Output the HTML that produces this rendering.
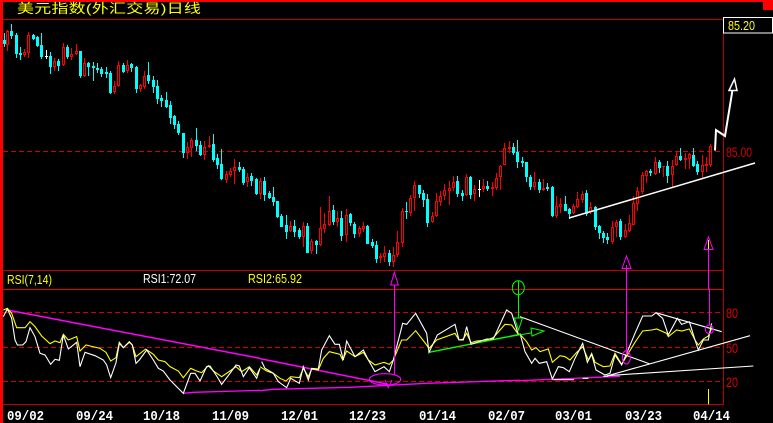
<!DOCTYPE html>
<html>
<head>
<meta charset="utf-8">
<style>
html,body{margin:0;padding:0;background:#000;width:773px;height:423px;overflow:hidden}
svg{display:block;position:absolute;left:0;top:0}
text{font-family:"Liberation Sans",sans-serif}
</style>
</head>
<body>
<svg width="773" height="423" viewBox="0 0 773 423" xmlns="http://www.w3.org/2000/svg">
<rect width="773" height="423" fill="#000"/>
<g shape-rendering="crispEdges" fill="none">
<path d="M3 19.5H723.5M3 270.5H723M3 404.5H723M723.5 19V405" stroke="#c00000"/>
<path d="M3 289.5H723" stroke="#e80000"/>
<path d="M3 151.5H723M3 312.5H723M3 347.5H723M3 381.5H723" stroke="#d00000" stroke-dasharray="5 3"/>
<rect x="0" y="0" width="3" height="423" fill="#f00"/>
<rect x="0" y="0" width="773" height="2" fill="#f00"/>
<rect x="763" y="0" width="10" height="10" fill="#f00"/>
<rect x="723.5" y="17.5" width="49" height="15.5" stroke="#fff" fill="#000"/>
<!-- cyan wicks -->
<path stroke="#00ffff" d="M4.5 33V47M11.5 24V39M16.5 33V58M20.5 47V60M33.5 34V40M37.5 36V47M41.5 33V59M50.5 52V74M58.5 59V71M67.5 45V59M80.5 51V78M88.5 62V76M93.5 62V81M97.5 63V73M101.5 67V77M106.5 67V78M110.5 71V94M123.5 63V73M131.5 63V72M136.5 66V93M148.5 62V84M153.5 76V93M157.5 80V104M161.5 95V107M166.5 92V108M170.5 101V124M174.5 115V129M178.5 121V135M183.5 133V158M196.5 128V151M200.5 141V156M213.5 134V162M217.5 154V169M221.5 149V180M239.5 162V172M243.5 167V185M251.5 173V186M256.5 178V195M264.5 177V201M269.5 191V199M273.5 187V206M277.5 201V218M281.5 214V227M286.5 215V239M294.5 220V237M299.5 228V239M307.5 223V253M316.5 240V254M333.5 205V225M341.5 211V241M350.5 213V226M354.5 222V238M367.5 225V244M372.5 239V248M376.5 241V263M389.5 250V266M406.5 202V219M419.5 185V198M423.5 190V207M427.5 194V227M457.5 176V197M462.5 190V201M470.5 176V199M487.5 181V191M513.5 143V155M517.5 140V168M522.5 157V167M526.5 162V182M530.5 175V190M539.5 179V193M547.5 183V191M552.5 186V217M565.5 196V211M569.5 208V219M586.5 190V216M595.5 206V230M599.5 225V239M603.5 231V243M607.5 233V244M620.5 219V240M650.5 169V176M659.5 160V173M667.5 161V183M680.5 148V161M693.5 148V167M697.5 161V175"/>
<!-- cyan bodies -->
<path stroke="#00ffff" stroke-width="3" d="M4.5 40V44M11.5 31V36M16.5 35V54M20.5 53V55M33.5 35V39M37.5 37V46M41.5 45V57M50.5 56V67M58.5 61V66M67.5 47V57M80.5 51V76M88.5 63V67M93.5 66V68M97.5 68V70M101.5 69V74M106.5 72V74M110.5 73V93M123.5 65V72M131.5 64V68M136.5 67V89M148.5 75V81M153.5 80V87M157.5 86V99M161.5 98V101M166.5 100V107M170.5 105V118M174.5 116V125M178.5 124V133M183.5 133V153M196.5 140V146M200.5 145V155M213.5 144V160M217.5 158V165M221.5 164V179M239.5 167V170M243.5 169V183M251.5 176V181M256.5 179V194M264.5 181V195M269.5 193V198M273.5 197V202M277.5 201V217M281.5 216V227M286.5 225V232M294.5 226V232M299.5 230V237M307.5 226V253M316.5 241V245M333.5 210V222M341.5 218V236M350.5 214V223M354.5 224V234M367.5 226V244M372.5 242V246M376.5 245V259M389.5 253V262M406.5 211V212M419.5 185V194M423.5 193V200M427.5 199V223M457.5 181V194M462.5 193V196M470.5 177V195M487.5 186V189M513.5 147V153M517.5 152V162M522.5 161V163M526.5 162V177M530.5 177V187M539.5 182V190M547.5 187V189M552.5 187V216M565.5 204V211M569.5 209V214M586.5 193V214M595.5 207V227M599.5 226V233M603.5 233V238M607.5 237V240M620.5 221V237M650.5 171V173M659.5 162V168M667.5 166V176M680.5 156V160M693.5 155V166M697.5 164V172"/>
<!-- red candles: wick above, wick below, hollow body -->
<path stroke="#ff0000" d="M7.5 30V31M7.5 45V51M6.5 31.5h2v13h-2zM24.5 49V52M24.5 55V57M23.5 52.5h2v2h-2zM28.5 32V35M28.5 53V58M27.5 35.5h2v17h-2zM54.5 58V61M54.5 67V71M53.5 61.5h2v5h-2zM63.5 43V47M63.5 65V66M62.5 47.5h2v17h-2zM71.5 48V54M71.5 57V60M70.5 54.5h2v2h-2zM76.5 44V51M76.5 54V55M75.5 51.5h2v2h-2zM84.5 58V63M84.5 76V77M83.5 63.5h2v12h-2zM114.5 81V86M114.5 92V94M113.5 86.5h2v5h-2zM118.5 61V65M118.5 86V87M117.5 65.5h2v20h-2zM127.5 60V65M127.5 71V73M126.5 65.5h2v5h-2zM140.5 84V85M140.5 89V92M139.5 85.5h2v3h-2zM144.5 71V76M144.5 87V89M143.5 76.5h2v10h-2zM187.5 142V147M187.5 153V159M186.5 147.5h2v5h-2zM191.5 138V140M191.5 148V157M190.5 140.5h2v7h-2zM204.5 141V147M204.5 155V160M203.5 147.5h2v7h-2zM209.5 136V145M209.5 147V148M208.5 145.5h2v1h-2zM226.5 171V174M226.5 180V183M225.5 174.5h2v5h-2zM230.5 168V171M230.5 175V177M229.5 171.5h2v3h-2zM234.5 159V167M234.5 171V184M233.5 167.5h2v3h-2zM247.5 173V177M247.5 182V187M246.5 177.5h2v4h-2zM260.5 178V181M260.5 194V199M259.5 181.5h2v12h-2zM290.5 221V226M290.5 231V232M289.5 226.5h2v4h-2zM303.5 222V226M303.5 237V247M302.5 226.5h2v10h-2zM311.5 239V241M311.5 251V254M310.5 241.5h2v9h-2zM320.5 207V228M320.5 245V246M319.5 228.5h2v16h-2zM324.5 213V224M324.5 229V233M323.5 224.5h2v4h-2zM329.5 196V211M329.5 225V226M328.5 211.5h2v13h-2zM337.5 211V218M337.5 222V227M336.5 218.5h2v3h-2zM346.5 209V215M346.5 235V242M345.5 215.5h2v19h-2zM359.5 226V228M359.5 234V237M358.5 228.5h2v5h-2zM363.5 222V226M363.5 229V232M362.5 226.5h2v2h-2zM380.5 253V256M380.5 258V263M379.5 256.5h2v1h-2zM384.5 246V253M384.5 257V262M383.5 253.5h2v3h-2zM393.5 247V255M393.5 262V267M392.5 255.5h2v6h-2zM397.5 231V242M397.5 255V257M396.5 242.5h2v12h-2zM402.5 208V211M402.5 243V247M401.5 211.5h2v31h-2zM410.5 195V198M410.5 213V216M409.5 198.5h2v14h-2zM414.5 181V185M414.5 198V211M413.5 185.5h2v12h-2zM432.5 212V216M432.5 222V223M431.5 216.5h2v5h-2zM436.5 193V201M436.5 216V217M435.5 201.5h2v14h-2zM440.5 191V196M440.5 202V206M439.5 196.5h2v5h-2zM444.5 184V190M444.5 196V200M443.5 190.5h2v5h-2zM449.5 181V188M449.5 191V205M448.5 188.5h2v2h-2zM453.5 176V182M453.5 188V191M452.5 182.5h2v5h-2zM466.5 174V177M466.5 195V196M465.5 177.5h2v17h-2zM474.5 185V189M474.5 194V201M473.5 189.5h2v4h-2zM483.5 179V186M483.5 189V192M482.5 186.5h2v2h-2zM492.5 182V187M492.5 189V196M491.5 187.5h2v1h-2zM496.5 173V178M496.5 188V190M495.5 178.5h2v9h-2zM500.5 165V166M500.5 177V190M499.5 166.5h2v10h-2zM504.5 143V148M503.5 148.5h2v16h-2zM509.5 141V147M509.5 149V153M508.5 147.5h2v1h-2zM534.5 172V182M534.5 187V190M533.5 182.5h2v4h-2zM543.5 179V188M543.5 190V191M542.5 188.5h2v1h-2zM556.5 196V206M556.5 216V218M555.5 206.5h2v9h-2zM560.5 198V204M560.5 207V213M559.5 204.5h2v2h-2zM573.5 204V206M573.5 213V214M572.5 206.5h2v6h-2zM577.5 192V199M577.5 207V208M576.5 199.5h2v7h-2zM582.5 191V194M582.5 200V203M581.5 194.5h2v5h-2zM590.5 202V207M590.5 212V214M589.5 207.5h2v4h-2zM612.5 221V227M612.5 242V244M611.5 227.5h2v14h-2zM616.5 220V222M616.5 227V237M615.5 222.5h2v4h-2zM625.5 224V230M625.5 237V238M624.5 230.5h2v6h-2zM629.5 215V223M629.5 231V232M628.5 223.5h2v7h-2zM633.5 196V203M632.5 203.5h2v21h-2zM637.5 187V191M637.5 204V211M636.5 191.5h2v12h-2zM642.5 172V175M642.5 192V194M641.5 175.5h2v16h-2zM646.5 170V171M646.5 176V183M645.5 171.5h2v4h-2zM655.5 157V162M655.5 174V175M654.5 162.5h2v11h-2zM663.5 166V177M662 166.5h3M672.5 160V166M672.5 175V187M671.5 166.5h2v8h-2zM676.5 151V156M676.5 165V166M675.5 156.5h2v8h-2zM685.5 153V158M685.5 160V169M684.5 158.5h2v1h-2zM689.5 153V154M689.5 159V169M688.5 154.5h2v4h-2zM702.5 155V165M702.5 172V178M701.5 165.5h2v6h-2zM706.5 157V164M706.5 166V172M705.5 164.5h2v1h-2zM710.5 144V146M710.5 165V167M709.5 146.5h2v18h-2z"/>
<path stroke="#fff" d="M46.5 50V59M45 56.5h3M479.5 180V197M478 189.5h3"/>
</g>

<g fill="none" stroke-linejoin="miter">
<!-- white target arrow + trend -->
<path d="M715 150.500L716 130L725 136L732.500 90" stroke="#fff" stroke-width="2"/>
<path d="M729 90.500L734.500 79L737 90.500z" stroke="#fff" stroke-width="1.500"/>
<path d="M569 218L755 163" stroke="#fff" stroke-width="1.500"/>
<!-- RSI zoom-coordinate groups -->
<g transform="translate(0 265) scale(.33333)" stroke-width="3.300">
<polyline stroke="#ff00ff" stroke-width="4.500" points="22,135 780,280"/>
<polyline stroke="#ff00ff" stroke-width="4" points="550,385 580,382 780,376"/>
<polyline stroke="#ffff00" points="10,135 22,130 35,145 50,188 75,188 90,170 105,185 125,213 150,236 165,228 180,233 190,208 205,225 230,215 240,258 258,240 300,250 318,262 332,288 348,278 358,232 370,248 388,232 397,240 408,275 437,252 460,268 475,285 495,290 510,305 535,318 550,338 572,310 590,318 605,323 625,302 640,318 665,335 690,318 708,305 725,320 748,305 770,330 780,310"/>
<polyline stroke="#fff" points="10,155 22,132 35,160 45,225 52,240 68,240 78,230 90,188 105,215 120,265 135,270 152,298 165,283 178,286 190,210 205,252 230,232 240,305 255,262 285,272 310,285 320,300 332,338 348,293 358,235 370,248 388,230 397,240 408,295 418,285 440,255 460,285 475,310 490,318 510,345 550,385 572,325 585,325 600,348 620,305 630,303 650,333 665,358 690,325 708,300 718,303 730,335 748,308 770,340 780,310"/>
</g>
<g transform="translate(260 265) scale(.33333)" stroke-width="3.300">
<polyline stroke="#ff00ff" stroke-width="4.500" points="0,281 385,358"/>
<polyline stroke="#ff00ff" stroke-width="4" points="0,377 40,373 270,367 500,355 735,347 780,346"/>
<polyline stroke="#00ff00" stroke-width="4" points="507,262 780,208"/>
<polyline stroke="#ffff00" points="0,305 20,318 40,325 60,340 78,348 92,335 118,338 130,310 145,335 155,312 175,315 190,280 208,260 240,268 248,285 260,258 285,275 310,262 325,285 345,300 372,292 388,298 400,285 425,225 440,225 467,197 500,240 507,250 530,225 585,205 597,225 610,222 620,205 633,233 650,228 680,225 700,218 735,178 755,180 775,208"/>
<polyline stroke="#fff" points="5,290 15,310 40,325 55,350 80,368 92,340 118,355 130,305 145,345 155,310 175,312 185,255 208,212 225,238 238,238 250,285 260,228 285,275 310,255 325,285 345,320 372,305 388,320 400,285 428,175 440,178 467,145 500,205 507,262 532,210 585,178 597,225 610,225 620,185 633,238 650,232 680,222 700,222 740,135 755,145 775,208"/>
<ellipse cx="375" cy="343" rx="47" ry="17" stroke="#ff00ff"/>
<path d="M403.500 60V330M392 60L403 22L415 60zM375 345L385 368L396 345" stroke="#ff00ff" stroke-width="3"/>
</g>
<g transform="translate(520 265) scale(.33333)" stroke-width="3.300">
<polyline stroke="#ff00ff" stroke-width="4" points="0,347 300,334"/>
<path d="M100 344H162M188 340H205M250 334H265" stroke="#fff" stroke-width="3.500"/>
<path d="M260 332L700 303M260 333L690 212M0 155L390 297M408 143L605 200" stroke="#fff" stroke-width="3.300"/>
<polyline stroke="#ffff00" points="0,208 20,230 35,255 48,248 60,260 85,252 97,292 120,272 135,275 150,285 170,262 188,245 205,285 215,265 225,292 250,305 270,303 285,265 305,298 322,270 345,232 368,198 395,195 410,192 440,205 445,215 470,195 485,198 508,192 525,225 535,240 550,222 565,213 575,190"/>
<polyline stroke="#fff" points="0,205 15,260 35,295 45,280 58,295 80,290 97,342 115,305 130,308 148,320 165,280 188,235 202,292 215,268 228,315 255,330 270,325 285,270 305,300 320,265 345,205 368,153 395,153 408,143 428,160 445,210 472,160 485,178 508,170 525,225 535,255 550,225 565,225 575,175"/>
<path d="M319.500 0V270" stroke="#ff00ff" stroke-width="3"/>
<ellipse cx="319" cy="277" rx="12" ry="20" stroke="#ff00ff"/>
<path d="M565.500 0V72H568.500V182" stroke="#ff00ff" stroke-width="3"/>
<ellipse cx="568" cy="193" rx="12" ry="13" stroke="#ff00ff"/>
<path d="M565.500 372V418" stroke="#ffff00" stroke-width="3"/>
</g>
<path d="M622 268.500L626.500 256L631 268.500z" stroke="#ff00ff"/>
<path d="M704 249.500L708.500 237L713 249.500z" stroke="#ff00ff"/>
<path d="M708.500 240V249" stroke="#ffff00"/>
<path d="M708.500 249V265" stroke="#ff00ff"/>
<!-- green markers -->
<ellipse cx="518.300" cy="287.700" rx="6" ry="7" stroke="#00ff00"/>
<path d="M518.500 281V318M514.500 318L522.500 318L518.500 330z" stroke="#00ff00"/>
<path d="M495 339L531 333M531 328L544 331L532 336z" stroke="#00ff00"/>
</g>

<!-- text -->
<text transform="translate(17 13) scale(1 .76)" font-size="17" letter-spacing=".25" fill="#ffff00" style='font-family:"Liberation Sans","WenQuanYi Zen Hei","Noto Sans CJK SC",sans-serif'>美元指数(外汇交易)日线</text>
<text x="728" y="30" font-size="13" fill="#ffff00" textLength="27" lengthAdjust="spacingAndGlyphs">85.20</text>
<text x="726" y="157" font-size="14" fill="#d00000" textLength="26" lengthAdjust="spacingAndGlyphs">85.00</text>
<text x="726" y="318" font-size="14" fill="#e00000" textLength="12" lengthAdjust="spacingAndGlyphs">80</text>
<text x="726" y="353" font-size="14" fill="#e00000" textLength="12" lengthAdjust="spacingAndGlyphs">50</text>
<text x="726" y="387" font-size="14" fill="#e00000" textLength="12" lengthAdjust="spacingAndGlyphs">20</text>
<text x="7" y="284" font-size="13" fill="#ffff00" textLength="45" lengthAdjust="spacingAndGlyphs">RSI(7,14)</text>
<text x="143" y="283" font-size="13" fill="#fff" textLength="53" lengthAdjust="spacingAndGlyphs">RSI1:72.07</text>
<text x="248" y="283" font-size="13" fill="#ffff00" textLength="54" lengthAdjust="spacingAndGlyphs">RSI2:65.92</text>
<g font-size="14" fill="#fff" font-weight="bold">
<text x="7" y="420" textLength="37" lengthAdjust="spacingAndGlyphs" style='font-family:"Liberation Mono",monospace'>09/02</text>
<text x="76" y="420" textLength="37" lengthAdjust="spacingAndGlyphs" style='font-family:"Liberation Mono",monospace'>09/24</text>
<text x="143" y="420" textLength="37" lengthAdjust="spacingAndGlyphs" style='font-family:"Liberation Mono",monospace'>10/18</text>
<text x="212" y="420" textLength="37" lengthAdjust="spacingAndGlyphs" style='font-family:"Liberation Mono",monospace'>11/09</text>
<text x="281" y="420" textLength="37" lengthAdjust="spacingAndGlyphs" style='font-family:"Liberation Mono",monospace'>12/01</text>
<text x="349" y="420" textLength="37" lengthAdjust="spacingAndGlyphs" style='font-family:"Liberation Mono",monospace'>12/23</text>
<text x="419" y="420" textLength="37" lengthAdjust="spacingAndGlyphs" style='font-family:"Liberation Mono",monospace'>01/14</text>
<text x="488" y="420" textLength="37" lengthAdjust="spacingAndGlyphs" style='font-family:"Liberation Mono",monospace'>02/07</text>
<text x="555" y="420" textLength="37" lengthAdjust="spacingAndGlyphs" style='font-family:"Liberation Mono",monospace'>03/01</text>
<text x="625" y="420" textLength="37" lengthAdjust="spacingAndGlyphs" style='font-family:"Liberation Mono",monospace'>03/23</text>
<text x="693" y="420" textLength="37" lengthAdjust="spacingAndGlyphs" style='font-family:"Liberation Mono",monospace'>04/14</text>
</g>
</svg>
</body>
</html>
